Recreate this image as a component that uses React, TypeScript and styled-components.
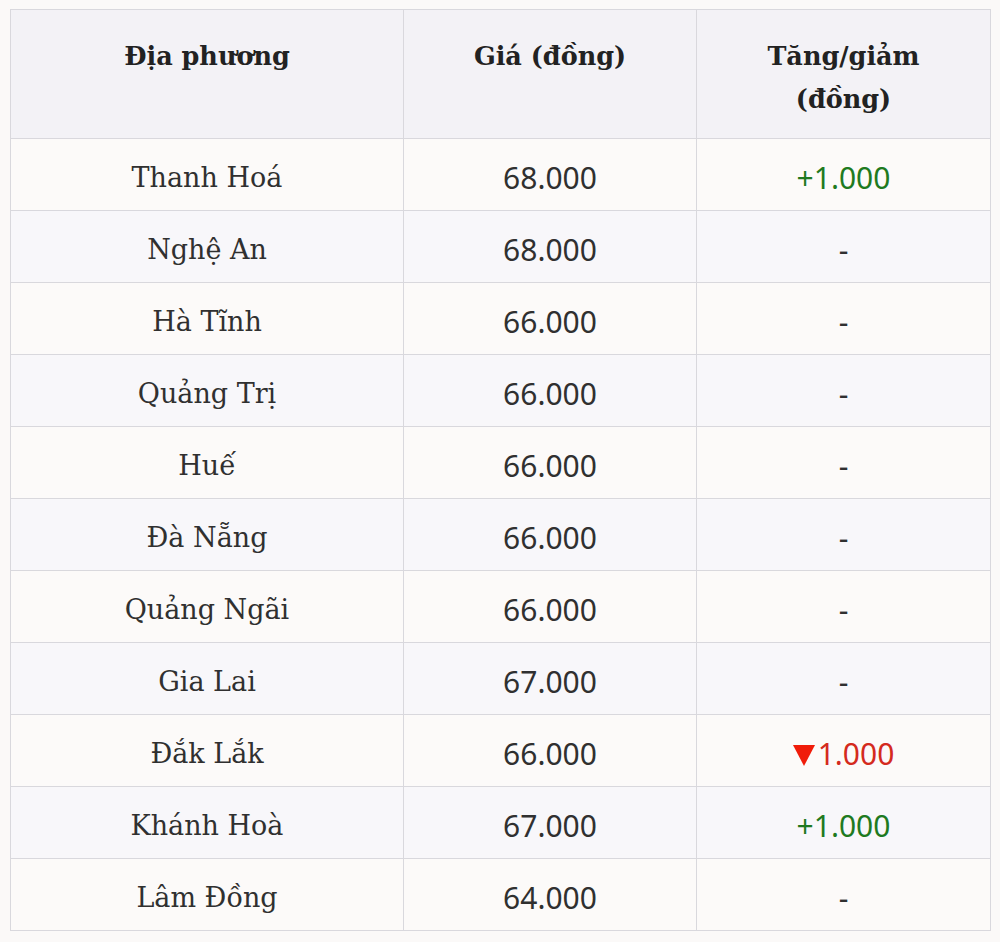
import React from "react";
import styled, { createGlobalStyle } from "styled-components";

const GlobalStyle = createGlobalStyle`
  html, body {
    margin: 0;
    padding: 0;
    background: #fbf9f8;
  }
`;

const Page = styled.div`
  padding: 9px 10px;
  width: 1000px;
  box-sizing: border-box;
`;

const Table = styled.table`
  width: 980px;
  border-collapse: collapse;
  table-layout: fixed;
`;

const HeadCell = styled.th`
  background: #f3f2f6;
  border: 1px solid #d9d8dd;
  height: 103px;
  padding: 25px 16px 0;
  vertical-align: top;
  font-family: "DejaVu Serif", "Liberation Serif", serif;
  font-weight: bold;
  font-size: 25.5px;
  line-height: 43px;
  color: #222;
  text-align: center;
`;

const Row = styled.tr<{ $alt: boolean }>`
  background: ${(p) => (p.$alt ? "#f8f7fa" : "#fcfaf9")};
`;

const Cell = styled.td<{ $serif?: boolean; $tone?: "up" | "down" | "none" }>`
  border: 1px solid #d9d8dd;
  height: 65px;
  padding: 6px 16px 0;
  text-align: center;
  vertical-align: middle;
  font-family: ${(p) =>
    p.$serif ? `"DejaVu Serif", "Liberation Serif", serif` : `"Noto Sans", sans-serif`};
  font-size: ${(p) => (p.$serif ? "27px" : "30px")};
  color: ${(p) =>
    p.$tone === "up" ? "#1f7a1f" : p.$tone === "down" ? "#d42a1e" : "#303030"};
`;

const Arrow = styled.span`
  display: inline-block;
  width: 0;
  height: 0;
  border-left: 11px solid transparent;
  border-right: 11px solid transparent;
  border-top: 21px solid #f01c0a;
  margin-right: 3px;
  vertical-align: -1px;
`;

type Item = { place: string; price: string; change: string; tone: "up" | "down" | "none" };

const rows: Item[] = [
  { place: "Thanh Hoá", price: "68.000", change: "+1.000", tone: "up" },
  { place: "Nghệ An", price: "68.000", change: "-", tone: "none" },
  { place: "Hà Tĩnh", price: "66.000", change: "-", tone: "none" },
  { place: "Quảng Trị", price: "66.000", change: "-", tone: "none" },
  { place: "Huế", price: "66.000", change: "-", tone: "none" },
  { place: "Đà Nẵng", price: "66.000", change: "-", tone: "none" },
  { place: "Quảng Ngãi", price: "66.000", change: "-", tone: "none" },
  { place: "Gia Lai", price: "67.000", change: "-", tone: "none" },
  { place: "Đắk Lắk", price: "66.000", change: "1.000", tone: "down" },
  { place: "Khánh Hoà", price: "67.000", change: "+1.000", tone: "up" },
  { place: "Lâm Đồng", price: "64.000", change: "-", tone: "none" },
];

export default function App() {
  return (
    <Page>
      <GlobalStyle />
      <Table>
        <colgroup>
          <col style={{ width: 393 }} />
          <col style={{ width: 293 }} />
          <col style={{ width: 294 }} />
        </colgroup>
        <thead>
          <tr>
            <HeadCell>Địa phương</HeadCell>
            <HeadCell>Giá (đồng)</HeadCell>
            <HeadCell>
              Tăng/giảm
              <br />
              (đồng)
            </HeadCell>
          </tr>
        </thead>
        <tbody>
          {rows.map((r, i) => (
            <Row key={r.place} $alt={i % 2 === 1}>
              <Cell $serif>{r.place}</Cell>
              <Cell>{r.price}</Cell>
              <Cell $tone={r.tone}>
                {r.tone === "down" && <Arrow />}
                {r.change}
              </Cell>
            </Row>
          ))}
        </tbody>
      </Table>
    </Page>
  );
}
